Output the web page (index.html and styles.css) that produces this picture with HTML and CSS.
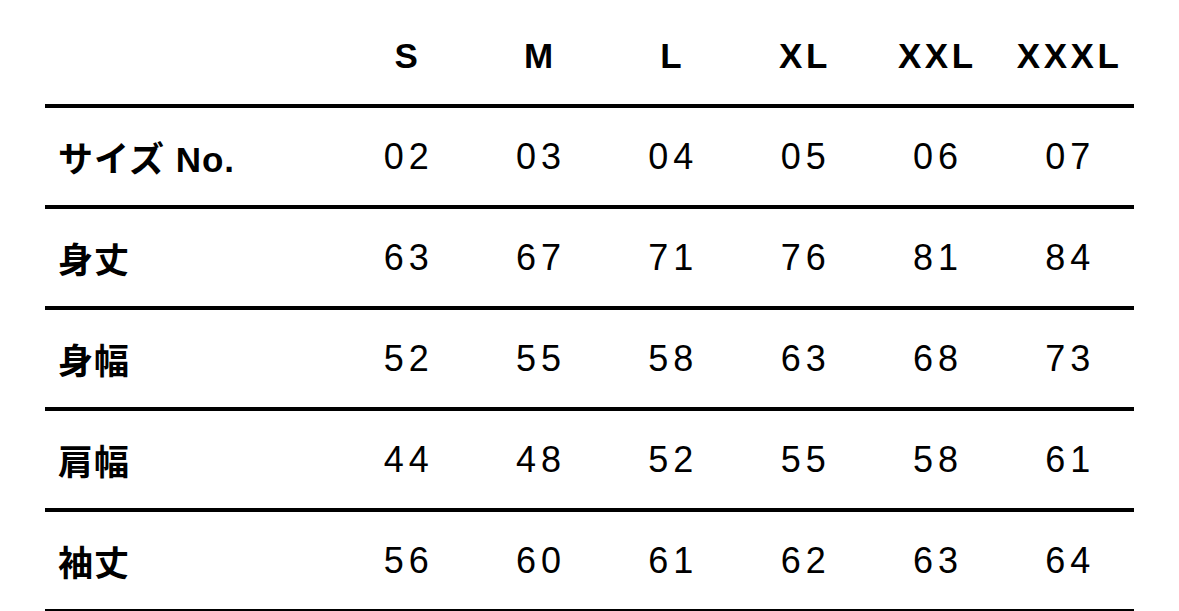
FILE: index.html
```html
<!DOCTYPE html>
<html lang="ja">
<head>
<meta charset="utf-8">
<title>サイズ表</title>
<link rel="stylesheet" href="styles.css">
</head>
<body>
<div class="size-table">
  <div class="row head">
    <div class="label"></div>
    <div class="cell">S</div>
    <div class="cell">M</div>
    <div class="cell">L</div>
    <div class="cell">XL</div>
    <div class="cell">XXL</div>
    <div class="cell">XXXL</div>
  </div>
  <div class="row">
    <div class="label">サイズ No.</div>
    <div class="cell">02</div>
    <div class="cell">03</div>
    <div class="cell">04</div>
    <div class="cell">05</div>
    <div class="cell">06</div>
    <div class="cell">07</div>
  </div>
  <div class="row">
    <div class="label">身丈</div>
    <div class="cell">63</div>
    <div class="cell">67</div>
    <div class="cell">71</div>
    <div class="cell">76</div>
    <div class="cell">81</div>
    <div class="cell">84</div>
  </div>
  <div class="row">
    <div class="label">身幅</div>
    <div class="cell">52</div>
    <div class="cell">55</div>
    <div class="cell">58</div>
    <div class="cell">63</div>
    <div class="cell">68</div>
    <div class="cell">73</div>
  </div>
  <div class="row">
    <div class="label">肩幅</div>
    <div class="cell">44</div>
    <div class="cell">48</div>
    <div class="cell">52</div>
    <div class="cell">55</div>
    <div class="cell">58</div>
    <div class="cell">61</div>
  </div>
  <div class="row">
    <div class="label">袖丈</div>
    <div class="cell">56</div>
    <div class="cell">60</div>
    <div class="cell">61</div>
    <div class="cell">62</div>
    <div class="cell">63</div>
    <div class="cell">64</div>
  </div>
</div>
</body>
</html>
```

FILE: styles.css
```css
html, body {
  margin: 0;
  padding: 0;
  background: #ffffff;
}

body {
  color: #000000;
  font-family: "Liberation Sans", "Noto Sans CJK JP", sans-serif;
}

.size-table {
  width: 1089px;
  margin: 0 0 0 45px;
  padding-top: 8px;
}

.row {
  display: grid;
  grid-template-columns: 295px repeat(6, 1fr);
  align-items: center;
  height: 97px;
  border-bottom: 4px solid #000000;
}

.row.head {
  height: 96px;
}

.label {
  padding-left: 13px;
  font-size: 35px;
  font-weight: 700;
  letter-spacing: 1px;
  white-space: nowrap;
}

.cell {
  text-align: center;
  font-size: 36px;
  letter-spacing: 5px;
  text-indent: 5px;
}

.head .cell {
  font-size: 35px;
  font-weight: 700;
  letter-spacing: 3.5px;
  text-indent: 3.5px;
}
```
